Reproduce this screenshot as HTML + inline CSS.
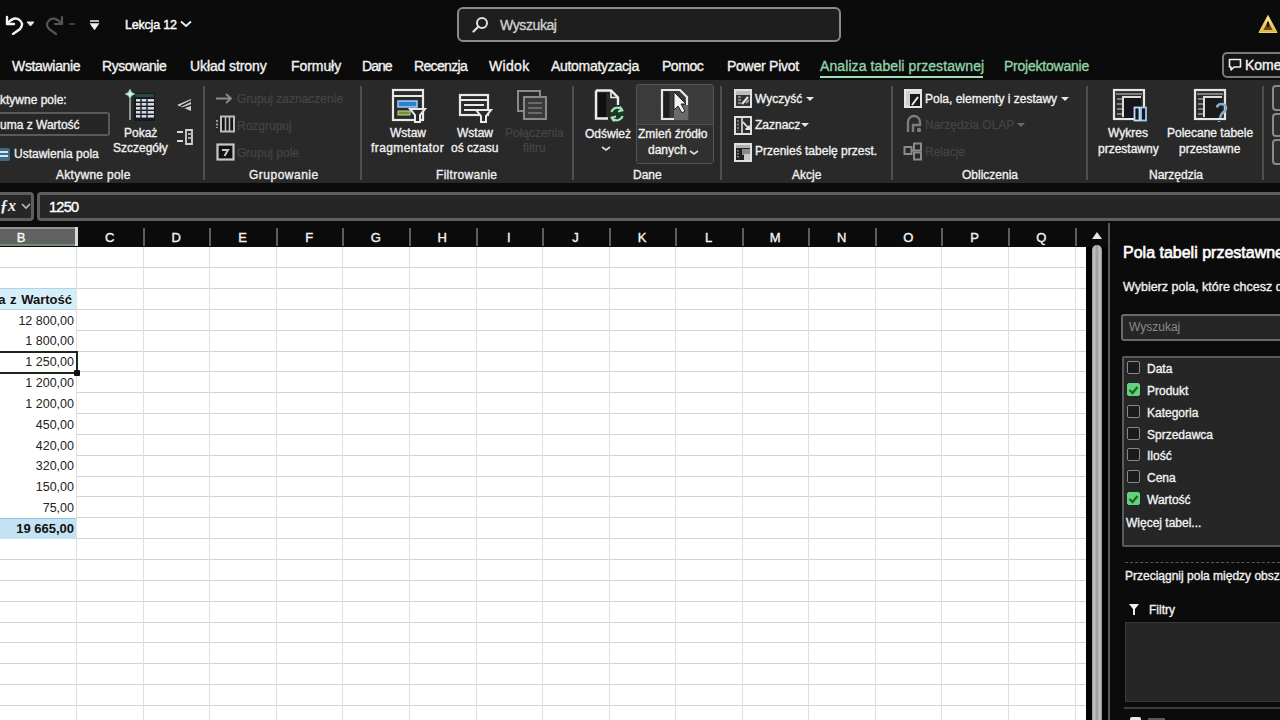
<!DOCTYPE html>
<html><head><meta charset="utf-8">
<style>
*{margin:0;padding:0;box-sizing:border-box}
.s{-webkit-text-stroke:0.35px currentColor}
html,body{width:1280px;height:720px;overflow:hidden;background:#0b0b0b;font-family:"Liberation Sans",sans-serif;color:#fff}
.tab,.gl,.lbl,.fl,.ch{-webkit-text-stroke:0.35px currentColor}
.a{position:absolute;white-space:nowrap}
.tab{position:absolute;top:58px;font-size:14px;color:#f2f2f2;line-height:16px}
.rib{position:absolute;left:0;top:80px;width:1280px;height:103px;background:#292929}
.sep{position:absolute;top:86px;width:2px;height:94px;background:#4e4e4e}
.gl{position:absolute;margin-top:1px;font-size:12px;line-height:14px;color:#f0f0f0;text-align:center}
.lbl{font-size:12px;line-height:14px;color:#f0f0f0}
.dis{color:#454545;-webkit-text-stroke:0.2px #454545}
.grid{position:absolute;left:0;top:247px;width:1086px;height:473px;background:#fff}
.cell{position:absolute;font-size:12.5px;line-height:16px;color:#222;text-align:right}
.ch{position:absolute;top:231px;font-size:13px;line-height:14px;color:#f4f4f4;text-align:center;width:20px}
.fl{position:absolute;left:1147px;font-size:12px;line-height:14px;margin-top:1px;color:#f2f2f2}
.cb{position:absolute;left:1127px;width:13px;height:13px;border:1.5px solid #8a8a8a;border-radius:2px;background:#1a1a1a}
.cb.on{background:#62d27c;border-color:#62d27c}
</style></head><body>

<!-- TITLE BAR -->
<div class="a" style="left:457px;top:7px;width:384px;height:35px;border:2.5px solid #8a8a8a;border-radius:6px;background:#1e1e1e"></div>
<div class="a" style="left:125px;top:17px;font-size:12.5px;letter-spacing:-0.2px;line-height:16px;color:#fff;-webkit-text-stroke:0.4px #fff">Lekcja 12</div>
<svg class="a" style="left:180px;top:20px" width="12" height="8"><path d="M1 1.5 L6 6 L11 1.5" fill="none" stroke="#f0f0f0" stroke-width="1.8"/></svg>
<svg class="a" style="left:4px;top:14px" width="20" height="21"><path d="M3 3 V10 H10" fill="none" stroke="#f4f4f4" stroke-width="2.4" stroke-linejoin="round" stroke-linecap="round"/><path d="M3.5 9.5 Q9 3 14 5 Q21 9 16 15 L9 20" fill="none" stroke="#f4f4f4" stroke-width="2.4" stroke-linecap="round"/></svg>
<svg class="a" style="left:26px;top:21px" width="9" height="6"><path d="M1 1 L4.5 5 L8 1 Z" fill="#e8e8e8" stroke="#e8e8e8" stroke-width="1"/></svg>
<svg class="a" style="left:45px;top:14px" width="20" height="21"><path d="M17 3 V10 H10" fill="none" stroke="#555" stroke-width="2.2" stroke-linejoin="round" stroke-linecap="round"/><path d="M16.5 9.5 Q11 3 6 5 Q-1 9 4 15 L11 20" fill="none" stroke="#555" stroke-width="2.2" stroke-linecap="round"/></svg>
<div class="a" style="left:69px;top:23px;width:6px;height:2px;background:#3c3c3c"></div>
<svg class="a" style="left:89px;top:20px" width="11" height="10"><path d="M1 1 H10 M2 4 H9 L5.5 9 Z" fill="#f0f0f0" stroke="#f0f0f0" stroke-width="1.5"/></svg>
<svg class="a" style="left:472px;top:16px" width="17" height="17"><circle cx="10" cy="7" r="5" fill="none" stroke="#e0e0e0" stroke-width="2"/><path d="M6.5 10.5 L1.5 15.5" stroke="#e0e0e0" stroke-width="2.2" stroke-linecap="round"/></svg>
<svg class="a" style="left:1258px;top:14px" width="20" height="20"><defs><linearGradient id="wg" x1="0" y1="0" x2="0" y2="1"><stop offset="0" stop-color="#fff0b0"/><stop offset="1" stop-color="#e0b040"/></linearGradient></defs><path d="M10 1.5 L19 18.5 H1 Z" fill="url(#wg)" stroke="#f4d27a" stroke-width="1" stroke-linejoin="round"/><path d="M10 6.5 L14.5 16 H5.5 Z" fill="#6a4a10"/><path d="M10 8 V13" stroke="#1a1000" stroke-width="1.8"/></svg>
<div class="a" style="left:1222px;top:52px;width:80px;height:26px;border:2px solid #7a7a7a;border-radius:5px;background:#141414"></div>
<svg class="a" style="left:1228px;top:58px" width="14" height="14"><path d="M1.5 1.5 H12.5 V9 H6 L3 12 V9 H1.5 Z" fill="none" stroke="#f0f0f0" stroke-width="1.6" stroke-linejoin="round"/></svg>
<div class="a" style="left:1245px;top:57px;font-size:14px;line-height:16px;color:#f2f2f2;-webkit-text-stroke:0.4px #f2f2f2">Komentarze</div>
<div class="a" style="left:500px;top:17px;font-size:14px;line-height:16px;color:#d0d0d0;letter-spacing:-0.4px;-webkit-text-stroke:0.35px #d0d0d0">Wyszukaj</div>

<!-- TABS -->
<div class="tab" style="left:12px;letter-spacing:-0.33px">Wstawianie</div>
<div class="tab" style="left:102px;letter-spacing:-0.47px">Rysowanie</div>
<div class="tab" style="left:190px;letter-spacing:-0.10px">Układ strony</div>
<div class="tab" style="left:291px;letter-spacing:-0.07px">Formuły</div>
<div class="tab" style="left:362px;letter-spacing:-0.97px">Dane</div>
<div class="tab" style="left:414px;letter-spacing:-0.66px">Recenzja</div>
<div class="tab" style="left:489px;letter-spacing:0.33px">Widok</div>
<div class="tab" style="left:551px;letter-spacing:-0.30px">Automatyzacja</div>
<div class="tab" style="left:662px;letter-spacing:-0.47px">Pomoc</div>
<div class="tab" style="left:727px;letter-spacing:-0.25px">Power Pivot</div>
<div class="tab" style="left:820px;letter-spacing:0.09px;color:#8fd3a6">Analiza tabeli przestawnej</div>
<div class="a" style="left:820px;top:76px;width:163px;height:2px;background:#9fe0b4"></div>
<div class="tab" style="left:1004px;letter-spacing:-0.23px;color:#8fd3a6">Projektowanie</div>

<!-- RIBBON -->
<div class="rib"></div>
<div class="sep" style="left:203px"></div>
<div class="sep" style="left:360px"></div>
<div class="sep" style="left:572px"></div>
<div class="sep" style="left:720px"></div>
<div class="sep" style="left:891px"></div>
<div class="sep" style="left:1086px"></div>
<div class="sep" style="left:1262px"></div>

<!-- group: Aktywne pole -->
<div class="a lbl" style="left:-8px;top:93px">Aktywne pole:</div>
<div class="a" style="left:-4px;top:112px;width:114px;height:24px;border:2px solid #5a5a5a;border-radius:3px;background:#262626"></div>
<div class="a lbl" style="left:-8px;top:118px">Suma z Wartość</div>
<svg class="a" style="left:0;top:147px" width="12" height="15"><rect x="-4" y="1" width="14" height="13" rx="2" fill="#3e6b86"/><rect x="-2" y="4" width="10" height="2" fill="#cfe6f2"/><rect x="-2" y="8" width="10" height="2" fill="#cfe6f2"/></svg>
<div class="a lbl" style="left:14px;top:147px">Ustawienia pola</div>
<svg class="a" style="left:124px;top:88px" width="34" height="34"><path d="M6 11 V32" stroke="#b0b0b0" stroke-width="1.6"/><rect x="10" y="5" width="21" height="28" fill="#141a24"/><rect x="11" y="6" width="19" height="3" fill="#2a4a3a"/><rect x="12" y="11" width="18" height="2.6" fill="#d4d8dc"/><rect x="12" y="15" width="18" height="2.6" fill="#d4d8dc"/><rect x="12" y="19" width="18" height="2.6" fill="#d4d8dc"/><rect x="12" y="23" width="18" height="2.6" fill="#d4d8dc"/><rect x="12" y="27" width="18" height="2.6" fill="#d4d8dc"/><path d="M17 10 V32 M23 10 V32" stroke="#1b2230" stroke-width="1.4"/><path d="M6 1.5 Q6.8 5.2 10.5 6 Q6.8 6.8 6 10.5 Q5.2 6.8 1.5 6 Q5.2 5.2 6 1.5 Z" fill="#c8f4dc" stroke="#9fe8c0" stroke-width="1"/></svg>
<div class="a lbl" style="left:124px;top:126px">Pokaż</div>
<div class="a lbl" style="left:113px;top:141px">Szczegóły</div>
<svg class="a" style="left:175px;top:97px" width="20" height="18"><path d="M2 8 L16 2 V14 Z" fill="#d0d0d0"/><path d="M6 9 L16 4 M8 11 L16 8" stroke="#292929" stroke-width="1.6"/></svg>
<svg class="a" style="left:175px;top:129px" width="20" height="17"><path d="M2 3 H8 M2 12 H8" stroke="#d8d8d8" stroke-width="2.2"/><path d="M11 1 H17 V15 H11 Z" fill="none" stroke="#d0d0d0" stroke-width="1.8"/><path d="M13 5 H16 M13 9 H16" stroke="#d0d0d0" stroke-width="1.5"/></svg>
<div class="gl" style="left:56px;top:167px;letter-spacing:0.28px">Aktywne pole</div>

<!-- group: Grupowanie -->
<svg class="a" style="left:215px;top:92px" width="20" height="13"><path d="M1 6.5 H16 M11 2 L16 6.5 L11 11" stroke="#8c8c8c" stroke-width="1.8" fill="none"/></svg>
<div class="a lbl dis" style="left:237px;top:92px">Grupuj zaznaczenie</div>
<svg class="a" style="left:215px;top:115px" width="21" height="18"><rect x="6" y="1.5" width="13" height="15" fill="#151515" stroke="#bcbcbc" stroke-width="2"/><path d="M10.5 2 V16 M14.5 2 V16" stroke="#bcbcbc" stroke-width="1.6"/><path d="M2 5 V13" stroke="#9a9a9a" stroke-width="2" stroke-dasharray="2 1.5"/></svg>
<div class="a lbl dis" style="left:237px;top:119px">Rozgrupuj</div>
<svg class="a" style="left:216px;top:143px" width="19" height="18"><rect x="1.5" y="1.5" width="16" height="15" fill="#111" stroke="#c8c8c8" stroke-width="2.2"/><path d="M6 7 H12 L8.5 13" stroke="#c8c8c8" stroke-width="2" fill="none"/></svg>
<div class="a lbl dis" style="left:237px;top:146px">Grupuj pole</div>
<div class="gl" style="left:249px;top:167px;letter-spacing:0.5px">Grupowanie</div>

<!-- group: Filtrowanie -->
<svg class="a" style="left:391px;top:88px" width="36" height="35">
 <rect x="2" y="2" width="30" height="30" fill="none" stroke="#e8e8e8" stroke-width="2.2"/>
 <path d="M2 8 H32" stroke="#e8e8e8" stroke-width="2"/>
 <rect x="7" y="13" width="19" height="6" fill="#2d7fd0" stroke="#9fd0f5" stroke-width="1.5"/>
 <rect x="7" y="23" width="12" height="4" fill="#6e8f3e" stroke="#c8d890" stroke-width="1"/>
 <path d="M19 21 H34 L29 27 V34 H24 V27 Z" fill="#292929" stroke="#e8e8e8" stroke-width="2"/>
</svg>
<div class="a lbl" style="left:390px;top:126px">Wstaw</div>
<div class="a lbl" style="left:371px;top:141px;letter-spacing:0.42px">fragmentator</div>
<svg class="a" style="left:457px;top:93px" width="36" height="30">
 <rect x="3" y="2" width="28" height="20" fill="none" stroke="#e8e8e8" stroke-width="2.2"/>
 <path d="M3 7 H31 M7 12 H27 M7 17 H20" stroke="#e8e8e8" stroke-width="1.8"/>
 <path d="M19 17 H34 L29 23 V29 H24 V23 Z" fill="#292929" stroke="#e8e8e8" stroke-width="2"/>
</svg>
<div class="a lbl" style="left:457px;top:126px">Wstaw</div>
<div class="a lbl" style="left:451px;top:141px">oś czasu</div>
<svg class="a" style="left:515px;top:88px" width="36" height="34">
 <rect x="3" y="3" width="22" height="20" fill="none" stroke="#8a8a8a" stroke-width="2"/>
 <rect x="9" y="9" width="22" height="22" fill="#3a3a3a" stroke="#8a8a8a" stroke-width="2"/>
 <path d="M13 15 H27 M13 20 H27 M13 25 H27" stroke="#7a7a7a" stroke-width="1.6"/>
</svg>
<div class="a lbl dis" style="left:505px;top:126px">Połączenia</div>
<div class="a lbl dis" style="left:523px;top:141px">filtru</div>
<div class="gl" style="left:436px;top:167px;letter-spacing:0.3px">Filtrowanie</div>

<!-- group: Dane -->
<svg class="a" style="left:593px;top:88px" width="34" height="36"><path d="M3 2.5 H18 L25 9.5 V17 M3 2.5 V30.5 H15" fill="none" stroke="#ececec" stroke-width="2.4"/><path d="M18 3 V9.5 H24.5" fill="none" stroke="#ececec" stroke-width="1.6"/><rect x="5" y="5" width="8" height="24" fill="#101010"/><circle cx="24" cy="26" r="7" fill="#173a22"/><path d="M18.5 24 A6 6 0 0 1 29 22 M29.5 28 A6 6 0 0 1 19 30" fill="none" stroke="#a8e0b8" stroke-width="2.2"/><path d="M27 18.5 L29.5 22.5 L25 23.5 M21 33.5 L18.5 29.5 L23 28.5" fill="none" stroke="#a8e0b8" stroke-width="1.8"/></svg>
<div class="a lbl" style="left:585px;top:127px">Odśwież</div>
<svg class="a" style="left:601px;top:146px" width="10" height="6"><path d="M1 1 L5 4 L9 1" fill="none" stroke="#dcdcdc" stroke-width="1.6"/></svg>
<div class="a" style="left:636px;top:84px;width:78px;height:80px;border:1.5px solid #555;border-radius:3px;background:#3b3b3b"></div>
<div class="a" style="left:637px;top:124px;width:76px;height:39px;background:#303030;border-top:1.5px solid #4e4e4e"></div>
<svg class="a" style="left:660px;top:88px" width="36" height="35">
 <path d="M2 2 H20 L27 9 V31 H2 Z" fill="none" stroke="#e8e8e8" stroke-width="2.2"/>
 <rect x="3.5" y="3.5" width="6" height="26" fill="#1d1d1d"/>
 <rect x="14" y="17" width="14" height="15" fill="#6a6a6a"/>
 <path d="M14 4 L14 22 L18 18 L22 25 L25 23 L21 16 L26 16 Z" fill="#f2f2f2" stroke="#222" stroke-width="1"/>
</svg>
<div class="a lbl" style="left:638px;top:127px">Zmień źródło</div>
<div class="a lbl" style="left:648px;top:143px">danych</div>
<svg class="a" style="left:689px;top:150px" width="10" height="6"><path d="M1 1 L5 4 L9 1" fill="none" stroke="#dcdcdc" stroke-width="1.6"/></svg>
<div class="gl" style="left:633px;top:167px">Dane</div>

<!-- group: Akcje -->
<svg class="a" style="left:733px;top:88px" width="20" height="20"><rect x="2" y="2" width="16" height="17" fill="#333" stroke="#e0e0e0" stroke-width="2"/><rect x="3" y="3" width="14" height="4" fill="#bdbdbd"/><path d="M5 9 H8 M5 12 H8 M5 15 H8" stroke="#9a9a9a" stroke-width="1.3"/><path d="M9 16 L15 9" stroke="#e8e8e8" stroke-width="2"/><path d="M13 15 L16 12" stroke="#9a9a9a" stroke-width="2"/></svg>
<div class="a lbl" style="left:755px;top:92px">Wyczyść</div>
<svg class="a" style="left:806px;top:97px" width="8" height="5"><path d="M0 0 H8 L4 4 Z" fill="#e6e6e6"/></svg>
<svg class="a" style="left:733px;top:115px" width="20" height="20"><rect x="2" y="2" width="16" height="17" fill="#2e2e2e" stroke="#e0e0e0" stroke-width="2"/><path d="M5 5 V16" stroke="#8a8a8a" stroke-width="1.6" stroke-dasharray="2 1.5"/><path d="M9 3 V18" stroke="#e0e0e0" stroke-width="1.6"/><path d="M10 7 L16 14 L12.5 14 M16 14 V10.5" stroke="#e8e8e8" stroke-width="1.8" fill="none"/></svg>
<div class="a lbl" style="left:755px;top:118px">Zaznacz</div>
<svg class="a" style="left:801px;top:123px" width="8" height="5"><path d="M0 0 H8 L4 4 Z" fill="#e6e6e6"/></svg>
<svg class="a" style="left:733px;top:142px" width="20" height="20"><rect x="2" y="2" width="16" height="17" fill="#222" stroke="#e0e0e0" stroke-width="2"/><rect x="3" y="3" width="14" height="3" fill="#b0b0b0"/><path d="M5 8 V17" stroke="#9a9a9a" stroke-width="1.6" stroke-dasharray="1.5 1.5"/><rect x="9" y="7" width="8" height="6" fill="#8a8a8a"/><rect x="11" y="12" width="6" height="6" fill="#c8c8c8"/></svg>
<div class="a lbl" style="left:755px;top:144px">Przenieś tabelę przest.</div>
<div class="gl" style="left:792px;top:167px">Akcje</div>

<!-- group: Obliczenia -->
<svg class="a" style="left:903px;top:88px" width="20" height="20"><rect x="2" y="2" width="16" height="17" fill="#1a1a1a" stroke="#e6e6e6" stroke-width="2"/><rect x="3" y="3" width="14" height="3" fill="#e0e0e0"/><rect x="3" y="3" width="4" height="15" fill="#d0d0d0"/><path d="M9 17 L15 9" stroke="#f0f0f0" stroke-width="2"/></svg>
<div class="a lbl" style="left:925px;top:92px">Pola, elementy i zestawy</div>
<svg class="a" style="left:1061px;top:97px" width="8" height="5"><path d="M0 0 H8 L4 4 Z" fill="#e6e6e6"/></svg>
<svg class="a" style="left:904px;top:114px" width="19" height="20"><path d="M4 18 V8 A6 6 0 0 1 16 8 V11 H9 V18" fill="none" stroke="#7c7c7c" stroke-width="2.4"/><circle cx="15" cy="16" r="2.2" fill="#7c7c7c"/></svg>
<div class="a lbl dis" style="left:925px;top:118px">Narzędzia OLAP</div>
<svg class="a" style="left:1017px;top:123px" width="8" height="5"><path d="M0 0 H8 L4 4 Z" fill="#6a6a6a"/></svg>
<svg class="a" style="left:903px;top:142px" width="20" height="19"><rect x="1.5" y="5" width="7" height="7" fill="none" stroke="#8a8a8a" stroke-width="2"/><rect x="11" y="1.5" width="7" height="7" fill="none" stroke="#8a8a8a" stroke-width="2"/><rect x="11" y="10.5" width="7" height="7" fill="none" stroke="#8a8a8a" stroke-width="2"/><path d="M8.5 8.5 H11" stroke="#8a8a8a" stroke-width="2"/></svg>
<div class="a lbl dis" style="left:925px;top:145px">Relacje</div>
<div class="gl" style="left:962px;top:167px">Obliczenia</div>

<!-- group: Narzędzia -->
<svg class="a" style="left:1112px;top:88px" width="38" height="35">
 <rect x="2" y="2" width="30" height="29" fill="#2a2a2a" stroke="#e6e6e6" stroke-width="2.2"/>
 <path d="M4 6 H30 M5 11 H10 M5 16 H10 M5 21 H10 M5 26 H10" stroke="#9a9a9a" stroke-width="1.4"/>
 <path d="M11 29 V9 H29" fill="none" stroke="#dcdcdc" stroke-width="2"/>
 <rect x="12" y="10" width="17" height="20" fill="#17151c"/>
 <rect x="22.5" y="19.5" width="5" height="13" fill="#0e1626" stroke="#c4dcf4" stroke-width="1.8"/>
 <rect x="29" y="19.5" width="5" height="13" fill="#0e1626" stroke="#a8c8ec" stroke-width="1.8"/>
</svg>
<div class="a lbl" style="left:1108px;top:126px">Wykres</div>
<div class="a lbl" style="left:1098px;top:142px">przestawny</div>
<svg class="a" style="left:1193px;top:88px" width="38" height="35">
 <rect x="2" y="2" width="30" height="29" fill="#2a2a2a" stroke="#e6e6e6" stroke-width="2.2"/>
 <path d="M4 6 H30 M5 11 H10 M5 16 H10 M5 21 H10 M5 26 H10" stroke="#9a9a9a" stroke-width="1.4"/>
 <path d="M11 29 V9 H29" fill="none" stroke="#dcdcdc" stroke-width="2"/>
 <rect x="12" y="10" width="17" height="20" fill="#1a1a1a"/>
 <path d="M24 19.5 Q24.5 16 28.5 16 Q33 16.5 33 20 Q33 23 29.5 25 Q27.5 26.5 27 30 M26 33 V34" fill="none" stroke="#88aac8" stroke-width="2.6"/>
</svg>
<div class="a lbl" style="left:1167px;top:126px">Polecane tabele</div>
<div class="a lbl" style="left:1179px;top:142px">przestawne</div>
<div class="gl" style="left:1149px;top:167px">Narzędzia</div>
<div class="a" style="left:1272px;top:85px;width:20px;height:26px;border:2px solid #8a8a8a;border-radius:4px;background:#2e2e2e"></div>
<div class="a" style="left:1272px;top:113px;width:20px;height:24px;border:2px solid #8a8a8a;border-radius:4px;background:#2e2e2e"></div>
<div class="a" style="left:1272px;top:139px;width:20px;height:26px;border:2px solid #8a8a8a;border-radius:4px;background:#2e2e2e"></div>

<!-- FORMULA BAR -->
<div class="a" style="left:-6px;top:192px;width:40px;height:29px;border:3px solid #5e5e5e;border-radius:4px;background:#262626"></div>
<div class="a" style="left:37px;top:192px;width:1260px;height:29px;border:3px solid #5e5e5e;border-radius:4px;background:#262626"></div>
<div class="a" style="left:49px;top:199px;font-size:14.5px;line-height:16px;color:#fff;-webkit-text-stroke:0.4px #fff;letter-spacing:-0.75px">1250</div>
<div class="a" style="left:0px;top:197px;font-size:16px;line-height:18px;color:#f0f0f0;font-family:'Liberation Serif',serif;font-style:italic;font-weight:bold">ƒx</div>
<svg class="a" style="left:21px;top:203px" width="10" height="7"><path d="M1 1 L5 5 L9 1" fill="none" stroke="#bdbdbd" stroke-width="1.6"/></svg>

<!-- COLUMN HEADERS -->
<div class="a" style="left:0;top:223px;width:1086px;height:24px;background:#0b0b0b"></div>

<!-- GRID -->
<svg class="a" style="left:0;top:247px" width="1086" height="473"><rect width="1086" height="473" fill="#fff"/><path d="M0 20.5H1086M0 41.5H1086M0 62.5H1086M0 83.5H1086M0 104.5H1086M0 124.5H1086M0 145.5H1086M0 166.5H1086M0 187.5H1086M0 208.5H1086M0 229.5H1086M0 249.5H1086M0 270.5H1086M0 291.5H1086M0 312.5H1086M0 333.5H1086M0 354.5H1086M0 375.5H1086M0 395.5H1086M0 416.5H1086M0 437.5H1086M0 458.5H1086" stroke="#d3d3d3" stroke-width="1" fill="none"/><path d="M76.5 0V473M143.5 0V473M209.5 0V473M276.5 0V473M342.5 0V473M409.5 0V473M476.5 0V473M542.5 0V473M609.5 0V473M675.5 0V473M742.5 0V473M808.5 0V473M875.5 0V473M941.5 0V473M1008.5 0V473M1075.5 0V473" stroke="#e0e0e0" stroke-width="1" fill="none"/></svg>
<div class="ch" style="left:99.6px">C</div>
<div class="ch" style="left:166.1px">D</div>
<div class="ch" style="left:232.7px">E</div>
<div class="ch" style="left:299.2px">F</div>
<div class="ch" style="left:365.8px">G</div>
<div class="ch" style="left:432.3px">H</div>
<div class="ch" style="left:498.9px">I</div>
<div class="ch" style="left:565.4px">J</div>
<div class="ch" style="left:632.0px">K</div>
<div class="ch" style="left:698.5px">L</div>
<div class="ch" style="left:765.1px">M</div>
<div class="ch" style="left:831.6px">N</div>
<div class="ch" style="left:898.2px">O</div>
<div class="ch" style="left:964.7px">P</div>
<div class="ch" style="left:1031.3px">Q</div>
<div class="a" style="left:143px;top:228px;width:2px;height:18px;background:#5c5c5c"></div><div class="a" style="left:209px;top:228px;width:2px;height:18px;background:#5c5c5c"></div><div class="a" style="left:276px;top:228px;width:2px;height:18px;background:#5c5c5c"></div><div class="a" style="left:342px;top:228px;width:2px;height:18px;background:#5c5c5c"></div><div class="a" style="left:409px;top:228px;width:2px;height:18px;background:#5c5c5c"></div><div class="a" style="left:476px;top:228px;width:2px;height:18px;background:#5c5c5c"></div><div class="a" style="left:542px;top:228px;width:2px;height:18px;background:#5c5c5c"></div><div class="a" style="left:609px;top:228px;width:2px;height:18px;background:#5c5c5c"></div><div class="a" style="left:675px;top:228px;width:2px;height:18px;background:#5c5c5c"></div><div class="a" style="left:742px;top:228px;width:2px;height:18px;background:#5c5c5c"></div><div class="a" style="left:808px;top:228px;width:2px;height:18px;background:#5c5c5c"></div><div class="a" style="left:875px;top:228px;width:2px;height:18px;background:#5c5c5c"></div><div class="a" style="left:941px;top:228px;width:2px;height:18px;background:#5c5c5c"></div><div class="a" style="left:1008px;top:228px;width:2px;height:18px;background:#5c5c5c"></div><div class="a" style="left:1075px;top:228px;width:2px;height:18px;background:#5c5c5c"></div>

<div class="a" style="left:0;top:227px;width:77px;height:19px;background:#626262;border-top:2px solid #8c9a8c;border-bottom:2px solid #6f8f70"></div>
<div class="a" style="left:75px;top:227px;width:3px;height:19px;background:#d8d8d8"></div>
<div class="ch" style="left:11px">B</div>
<div class="a" style="left:0;top:310px;width:76px;height:208px;background:#fff"></div>
<div class="a" style="left:0;top:288px;width:76px;height:22px;background:#d6eef7;border-top:1px solid #a9d6ea;border-bottom:1px solid #a9d6ea"></div>
<div class="a" style="left:0;top:518px;width:76px;height:21px;background:#c4e3f2;border-top:1px solid #8fc3de"></div>
<div class="cell" style="left:-30px;width:102px;top:291.7px;font-weight:bold;color:#111;font-size:13px;word-spacing:1px">Suma z Wartość</div>
<div class="cell" style="left:-30px;width:104px;top:312.5px">12 800,00</div>
<div class="cell" style="left:-30px;width:104px;top:333.3px">1 800,00</div>
<div class="cell" style="left:-30px;width:104px;top:354.2px">1 250,00</div>
<div class="cell" style="left:-30px;width:104px;top:375.0px">1 200,00</div>
<div class="cell" style="left:-30px;width:104px;top:395.8px">1 200,00</div>
<div class="cell" style="left:-30px;width:104px;top:416.7px">450,00</div>
<div class="cell" style="left:-30px;width:104px;top:437.5px">420,00</div>
<div class="cell" style="left:-30px;width:104px;top:458.3px">320,00</div>
<div class="cell" style="left:-30px;width:104px;top:479.2px">150,00</div>
<div class="cell" style="left:-30px;width:104px;top:500.0px">75,00</div>
<div class="cell" style="left:-30px;width:104px;top:520.5px;font-weight:bold;color:#111;font-size:13px">19 665,00</div>
<div class="a" style="left:-3px;top:351px;width:81px;height:23px;border:2px solid #1a2a1a"></div>
<div class="a" style="left:74px;top:370px;width:6px;height:6px;background:#111;border-radius:1px"></div>

<!-- SCROLLBAR + PANE -->
<div class="a" style="left:1086px;top:247px;width:22px;height:473px;background:#030303"></div>
<div class="a" style="left:1092px;top:245px;width:10px;height:475px;border-radius:5px 5px 0 0;background:linear-gradient(90deg,#9a9a9a 0%,#c4c4c4 20%,#9c9c9c 50%,#c8c8c8 80%,#8a8a8a 100%)"></div>
<div class="a" style="left:1108px;top:223px;width:2px;height:497px;background:#5a5a5a"></div>
<div class="a" style="left:1110px;top:223px;width:170px;height:497px;background:#0b0b0b"></div>
<div class="a" style="left:1123px;top:244px;font-size:16px;line-height:18px;color:#fff;-webkit-text-stroke:0.6px #fff">Pola tabeli przestawnej</div>
<div class="a" style="left:1123px;top:280px;font-size:12.5px;line-height:14px;color:#f0f0f0;-webkit-text-stroke:0.35px #f0f0f0">Wybierz pola, które chcesz dodać do raportu:</div>
<svg class="a" style="left:1091px;top:230px" width="12" height="10"><path d="M1 9 L6 2 L11 9 Z" fill="#e6e6e6"/></svg>
<div class="a" style="left:1121px;top:314px;width:170px;height:27px;border:2px solid #6a6a6a;border-radius:3px;background:#262626"></div>
<div class="a" style="left:1129px;top:320px;font-size:12px;line-height:14px;color:#8a8a8a">Wyszukaj</div>
<div class="a" style="left:1122px;top:356px;width:170px;height:191px;border:2px solid #5a5a5a;border-radius:2px;background:#262626"></div>
<div class="cb" style="top:361px"></div><div class="fl" style="top:361px">Data</div>
<div class="cb on" style="top:383px"></div><div class="fl" style="top:383px">Produkt</div>
<div class="cb" style="top:405px"></div><div class="fl" style="top:405px">Kategoria</div>
<div class="cb" style="top:427px"></div><div class="fl" style="top:427px">Sprzedawca</div>
<div class="cb" style="top:448px"></div><div class="fl" style="top:448px">Ilość</div>
<div class="cb" style="top:470px"></div><div class="fl" style="top:470px">Cena</div>
<div class="cb on" style="top:492px"></div><div class="fl" style="top:492px">Wartość</div>
<svg class="a" style="left:1128px;top:385px" width="11" height="10"><path d="M1.5 5 L4.5 8 L9.5 2" fill="none" stroke="#17652a" stroke-width="2.2"/></svg>
<svg class="a" style="left:1128px;top:494px" width="11" height="10"><path d="M1.5 5 L4.5 8 L9.5 2" fill="none" stroke="#17652a" stroke-width="2.2"/></svg>
<div class="a" style="left:1126px;top:516px;font-size:12px;line-height:14px;color:#f2f2f2;-webkit-text-stroke:0.35px #f2f2f2">Więcej tabel...</div>
<div class="a" style="left:1125px;top:562px;width:160px;height:0;border-top:1px dashed #5a5a5a"></div>
<div class="a" style="left:1125px;top:569px;font-size:12px;line-height:14px;color:#f2f2f2;-webkit-text-stroke:0.35px #f2f2f2">Przeciągnij pola między obszary poniżej:</div>
<svg class="a" style="left:1128px;top:603px" width="12" height="13"><path d="M1 1 H11 L7 6 V12 H5 V6 Z" fill="#f0f0f0"/></svg>
<div class="a" style="left:1149px;top:603px;font-size:12px;line-height:14px;color:#f2f2f2;-webkit-text-stroke:0.35px #f2f2f2">Filtry</div>
<div class="a" style="left:1125px;top:622px;width:170px;height:80px;border:1px solid #3a3a3a;background:#262626"></div>
<div class="a" style="left:1124px;top:707px;width:160px;height:2px;background:#3e3e3e"></div>
<div class="a" style="left:1130px;top:717px;width:11px;height:5px;background:#e8e8e8;border-radius:2px 2px 0 0"></div>
<div class="a" style="left:1148px;top:718px;width:17px;height:4px;background:#5a5a5a"></div>

</body></html>
